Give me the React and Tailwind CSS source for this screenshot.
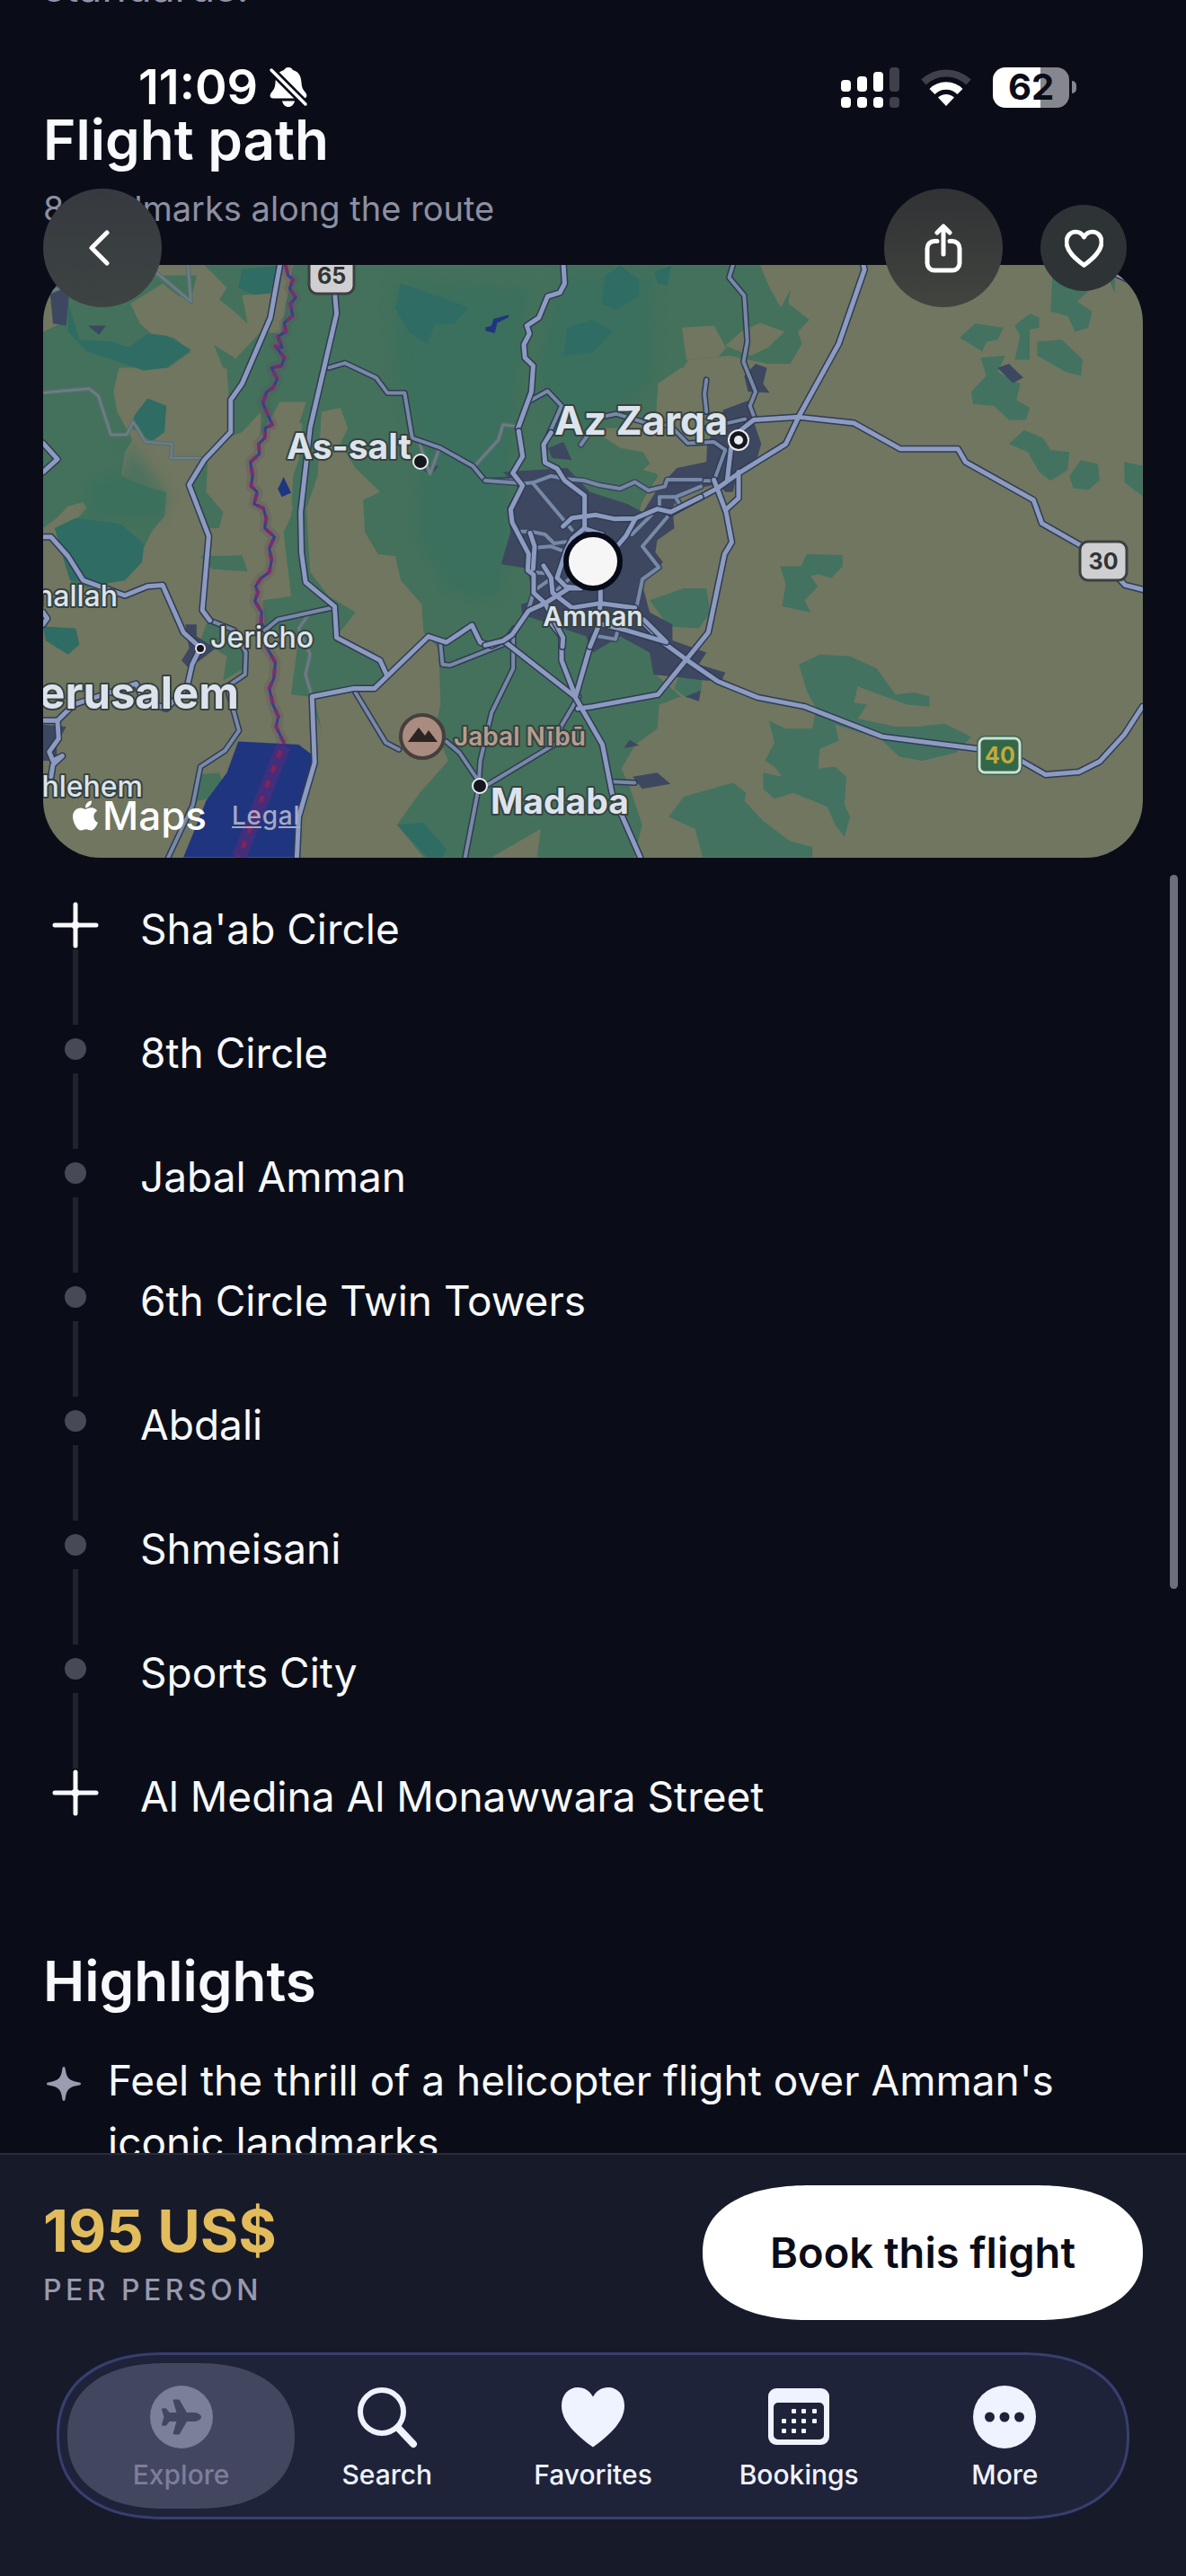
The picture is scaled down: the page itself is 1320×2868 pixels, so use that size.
import React, { useState } from 'react';
import { FaApple, FaPlane } from 'react-icons/fa';

const landmarks = [
  "Sha'ab Circle",
  '8th Circle',
  'Jabal Amman',
  '6th Circle Twin Towers',
  'Abdali',
  'Shmeisani',
  'Sports City',
  'Al Medina Al Monawwara Street',
];

const HEART = 'M12 21.6C6.6 17.6 2 13.4 2 8.4 2 4.9 4.3 2.6 7.2 2.6c2 0 3.8 1.1 4.8 3 1-1.9 2.8-3 4.8-3 2.9 0 5.2 2.3 5.2 5.8 0 5-4.6 9.2-10 13.2z';

/* ---------- map data ---------- */

// land cover, terrain grid
const green = [
  'M114 200L160 180 180 60 520 60 505 120 470 110 430 80 345 130 370 180 400 205 460 215 505 250 445 290 315 290 300 350 310 400 350 470 330 500 320 560 400 590 440 600 435 660 400 700 380 740 375 775 330 820 270 825 230 840 190 830 175 790 145 690 200 670 230 640 220 625 180 635 150 665 114 690z',
  'M775 34L2010 34 2035 90 2065 140 2090 95 2085 130 2140 170 2110 200 2120 230 2090 280 2030 280 1930 260 1820 270 1800 300 1740 330 1735 400 1640 440 1560 440 1640 490 1700 500 1740 560 1700 620 1600 900 1720 1000 1740 1060 1800 1110 1743 1130 1738 1190 1680 1230 1643 1290 1663 1330 1698 1430 1678 1511 1420 1511 1430 1440 1300 1511 790 1511 830 1290 850 1190 815 1110 770 1105 790 960 700 940 695 870 770 860 750 700 775 640 730 560 790 430 810 375 740 375 690 460 690 400 740 210z',
  'M540 34L740 34 715 100 640 110 655 180 620 150 580 120 600 90z',
  'M600 290L690 200 740 205 720 320 690 400 640 450 590 470 550 510 545 600 590 650 580 690 550 690 500 585 540 520 610 440z',
  'M565 232L620 265 635 300 590 290z',
  'M530 760L640 758 655 798 560 792z',
  'M550 920L650 960 645 1040 590 1070 600 1010 530 970z',
  'M520 1305L580 1300 590 1325 550 1365 515 1372z',
];

const tan = [
  'M850 400L900 390 920 440 900 480 940 540 1005 600 960 620 965 700 1000 755 1045 760 1060 820 1115 880 1120 950 1160 990 1165 1130 1150 1190 1185 1270 1110 1350 1050 1430 1120 1511 790 1511 830 1290 850 1190 830 1110 990 1095 1030 1055 990 1000 890 960 940 900 870 860 820 800 810 640 840 560z',
  'M735 440L760 410 800 430 790 520 775 560 770 660 750 700 700 640 690 560z',
  'M1803 190L1888 185 1920 240 1900 262 1815 270z',
  'M1918 235L1960 200 2010 178 2075 200 2030 240 1985 260z',
  'M1740 330L1800 290 1960 300 1970 380 1900 400 1860 520 1800 530 1760 560 1700 545 1750 500 1700 440 1640 450 1738 400z',
];

const teal = [
  'M180 130L210 220 300 225 340 240 390 205 440 210 505 245 440 290 380 297 300 270 230 250 180 200z',
  'M355 410L390 366 440 385 435 450 400 475 350 440z',
  'M145 690L200 665 320 680 380 730 375 775 330 820 270 830 185 820z',
  'M114 935L200 940 210 980 180 1005 120 970z',
  'M640 45L735 36 715 105 670 108 630 90z',
  'M1060 80L1240 140 1200 180 1150 180 1130 230 1080 200 1045 140z',
  'M1500 190L1568 170 1620 200 1568 250 1490 262z',
  'M1590 130L1600 60 1640 36 1690 70 1690 110 1630 145z',
  'M1730 50L1775 36 1765 85 1740 80z',
  'M1050 1430L1120 1425 1180 1490 1170 1511 1130 1511z',
];

// hill shading
const hills = [
  'M1040 80L1400 90 1370 300 1350 540 1340 780 1310 880 1180 840 1100 700 1110 480 1050 300z',
  'M1480 60L1730 60 1720 330 1500 480 1420 300z',
  'M340 480L440 600 430 660 230 660 240 570 320 560z',
];

const eastGreen = [
  'M1215 60L1380 60 1380 105 1365 70 1320 90 1280 125 1320 150 1310 190 1275 200 1255 160 1210 150z',
  'M1175 225L1240 220 1295 270 1290 310 1250 300 1175 260z',
  'M1115 185L1155 155 1180 165 1180 190 1155 195 1155 270 1115 270 1130 210z',
  'M970 215L1010 180 1085 190 1070 220 1040 225 1030 250z',
  'M1025 265L1090 260 1070 300 1130 330 1120 370 1155 390 1145 420 1100 420 1060 385 1005 380 1000 350 1040 310z',
  'M1100 480L1140 445 1190 465 1210 495 1260 500 1255 545 1210 572 1180 550 1150 500z',
  'M1260 560L1290 520 1335 530 1340 570 1310 595 1270 590z',
  'M1405 525L1453 535 1453 610 1405 575z',
  'M495 785L550 785 565 755 660 757 660 785 630 815 595 805 575 810 595 835 560 870 575 900 500 885 510 830z',
  'M150 870L240 840 300 840 310 900 280 940 200 935z',
  'M215 1090L230 1050 290 1060 285 1100 250 1115z',
  'M545 1030L600 1005 680 1010 750 1040 800 1105 850 1100 890 1110 890 1135 830 1130 700 1085 690 1125 725 1130 700 1165 800 1185 860 1185 930 1178 1000 1210 960 1250 870 1270 810 1260 760 1215 640 1180 650 1220 600 1240 595 1290 640 1285 670 1310 665 1380 680 1410 665 1460 640 1430 620 1385 530 1350 480 1365 450 1340 450 1300 500 1310 480 1285 455 1270 480 1225 465 1170 510 1190 580 1190 590 1140 565 1095z',
  'M200 1410L240 1360 370 1325 405 1350 400 1370 450 1420 520 1470 580 1485 580 1511 290 1511 270 1440z',
];

const urban = [
  'M130 80L185 80 175 185 140 180z',
  'M232 185L280 185 262 208z',
  'M490 930L520 930 520 960 570 990 500 1040 480 1020 500 990z',
  'M114 1180L175 1185 150 1230 150 1270 114 1270z',
  'M1092 530L1160 535 1140 558z',
  'M1450 490L1490 475 1512 520 1460 515z',
  'M1968 310L1998 280 2028 290 2018 330 2035 352 1978 350z',
  'M1330 550L1500 540 1560 600 1660 630 1700 650 1740 590 1790 540 1868 525 1870 480 1913 395 1983 370 1988 410 2013 480 1998 530 1948 560 1938 600 1918 600 1898 580 1798 600 1778 640 1783 690 1738 720 1733 750 1753 775 1698 830 1718 900 1778 930 1778 970 1868 1000 1848 1030 1918 1050 1908 1070 1868 1070 1728 1055 1718 1000 1640 960 1568 1000 1550 960 1380 905 1378 880 1410 870 1395 790 1325 780 1350 700 1340 640 1370 590z',
  'M2638 290L2668 280 2706 315 2678 328z',
  'M1813 1110L1853 1095 1848 1122z',
  'M1650 1238L1665 1218 1690 1232z',
  'M1673 1310L1738 1300 1773 1328 1698 1340z',
];

const water = [
  'M630 1222L790 1230 825 1255 830 1280 790 1400 785 1511 485 1511 520 1430 545 1370 600 1300z',
  'M735 592L750 562 770 602 745 612z',
  'M1283 190L1300 185 1305 168 1345 158 1345 164 1315 178 1308 204 1285 198z',
];

const majorRoads = [
  'M740 34L715 165 640 330 610 370 610 450 540 520 500 582 552 710 535 895 555 920',
  'M885 100L890 155 820 440 795 650 797 750 808 825 885 885 890 963 1005 1020 1022 1055',
  'M785 1511L790 1410 832 1275 825 1110 935 1090 990 1090 1133 960 1180 975 1248 932 1270 975 1300 983 1330 970',
  'M1490 34L1493 80 1480 103 1448 112 1425 165 1393 185 1400 205 1385 232 1388 265 1410 285 1405 350 1370 440',
  'M114 712L135 712 180 760 220 820 330 858 390 835 430 832 485 950 530 988 508 1030 495 1085 440 1140 380 1120 360 1078 195 1130 152 1170 114 1170',
  'M152 1170L155 1215 130 1248 140 1270 165 1258 140 1280 135 1310',
  'M114 478L152 518 114 550',
  'M114 900L125 915 114 930',
  'M1330 970L1520 1110 1593 1230 1618 1350 1693 1511',
  'M1460 930L1485 960 1485 1020 1522 1110 1568 960',
  'M2283 34L2286 45 2218 230 2113 410 2078 480 1958 550 1898 590 1773 653',
  'M1953 450L1993 420 2113 413 2258 428 2380 492 2533 492 2553 525 2733 620 2755 678 2880 745 2963 820 2975 832 3021 843',
  'M1953 550L1953 615 1918 645',
  'M1933 490L1923 570',
  'M1888 570L1920 650 1935 725 1916 755 1873 950 1740 1105 1568 1135 1528 1140',
  'M1690 915L1753 975 1818 1020 1898 1072 2003 1112 2128 1135 2333 1210 2583 1240 2700 1270 2765 1305 2853 1298 2908 1272 2973 1205 3021 1135',
  'M2950 55L3000 78',
];

const minorRoads = [
  'M555 920L620 945 650 1000 648 1055 600 1085 632 1195 595 1245 530 1285 510 1380 445 1511',
  'M870 290L912 278 995 315 1025 353 1070 353 1090 465 1165 490 1250 535 1283 572 1355 570',
  'M885 887L735 918 700 945',
  'M940 1100L1020 1225 1055 1242',
  'M1180 1222L1215 1250 1265 1320',
  'M1357 960L1357 1040 1300 1150 1270 1270 1265 1340 1230 1511',
  'M1280 1335L1500 1210 1480 1190 1530 1110',
  'M1165 980L1170 1030 1190 1032 1330 980 1360 940',
  'M1938 34L1928 65 1968 110 1976 225 1966 275 1998 350 1983 385 1993 410',
  'M1405 370L1448 348 1485 385 1440 480 1440 520',
  'M1578 415L1630 405 1700 425 1773 435 1818 478 1888 475 1918 495 1888 572 1763 572',
  'M1868 320L1863 355 1868 400',
  'M1868 440L1970 418',
  'M1618 1322L1678 1325',
];

const faintRoads = [
  'M114 352L235 342 260 360 293 457 335 457 352 425 385 475 455 480 452 515 540 515',
  'M410 50L505 125 497 34',
  'M820 900L790 940 820 1005 808 1055 825 1110',
  'M1255 535L1318 470 1330 432 1370 436',
  'M1110 480L1137 555 1162 490',
  'M120 105L160 90',
];

// downtown streets, finer grid
const cityMajor = [
  'M112 0L125 85 92 140 125 182 85 262 90 305 145 410 142 465 162 480 162 540 200 575 145 600 90 680 60 700 0 715',
  'M220 5L195 45 200 105 240 125 265 165 332 215 332 325',
  'M260 318L290 290 370 280 430 293 500 292 575 260 620 270 720 220',
  'M500 295L470 350 440 385',
  'M390 345L330 325 290 360 270 400 240 490 270 520 320 525 280 525 200 575',
  'M195 450L220 490 225 540 290 590 385 575 500 590',
  'M150 340L165 385 160 460',
  'M385 530L385 575 375 660 350 720',
  'M530 630L605 705 470 665 390 645',
  'M200 575L260 690 258 720',
];

const cityMinor = [
  'M0 165L130 175 160 172 220 150 270 160 330 165 380 180 450 192 500 170 545 198 600 185 608 162 720 162',
  'M160 175L290 330',
  'M555 280L490 345',
  'M610 285L525 385 580 455 525 495 505 590',
  'M120 335L150 335 200 345 230 375 270 370',
  'M160 390L220 385 260 400',
  'M150 470L200 475',
  'M175 525L210 500',
  'M235 535L285 490',
  'M375 685L435 695 440 675',
  'M582 245L582 220 635 220 720 185',
  'M635 220L650 245',
  'M145 595L160 545',
  'M320 45L345 10',
];

const border =
  'M755 34L762 60 775 70 766 92 782 115 768 130 774 160 752 178 756 200 735 212 746 240 728 236 752 265 744 285 718 290 733 318 722 340 705 350 695 378 705 400 720 432 702 440 700 465 684 480 686 505 662 525 668 560 664 585 680 600 672 630 696 640 704 665 700 690 726 712 712 740 718 770 712 800 690 815 676 835 682 850 674 872 692 900 690 925 708 950 704 985 728 1025 724 1065 712 1090 722 1130 736 1160 730 1185 752 1228';

function Roads({ paths, width, color = '#8c9bbf', casing = '#303b55' }) {
  return (
    <g fill="none" strokeLinejoin="round" strokeLinecap="round">
      {paths.map((d) => (
        <path key={d} d={d} stroke={casing} strokeWidth={width + 3} vectorEffect="non-scaling-stroke" />
      ))}
      {paths.map((d) => (
        <path key={d + 'f'} d={d} stroke={color} strokeWidth={width} vectorEffect="non-scaling-stroke" />
      ))}
    </g>
  );
}

function Shapes({ paths, fill, ...rest }) {
  return (
    <g fill={fill} {...rest}>
      {paths.map((d) => (
        <path key={d} d={d} />
      ))}
    </g>
  );
}

function Label({ x, y, size, anchor = 'start', weight = 700, fill = '#dde3ec', children }) {
  return (
    <text
      x={x}
      y={y}
      fontSize={size}
      fontWeight={weight}
      textAnchor={anchor}
      fill={fill}
      stroke="#36423f"
      strokeWidth="4"
      strokeLinejoin="round"
      paintOrder="stroke"
    >
      {children}
    </text>
  );
}

function Town({ x, y, r = 8 }) {
  return <circle cx={x} cy={y} r={r} fill="#15171c" stroke="#e8ebf0" strokeWidth="2" />;
}

function RouteMap() {
  return (
    <div className="relative mt-[39px] h-[660px] overflow-hidden rounded-[64px] bg-[#707660]">
      <svg
        className="h-full w-full"
        viewBox="0 0 1224 660"
        preserveAspectRatio="xMidYMid slice"
        fontFamily="Inter, sans-serif"
        role="img"
        aria-label="Map of the flight route around Amman"
      >
        <g transform="translate(-48 -15) scale(.4209 .4464)">
          <Shapes paths={green} fill="#44715b" />
          <Shapes paths={hills} fill="#35705f" opacity={0.6} style={{ filter: 'blur(18px)' }} />
          <Shapes paths={tan} fill="#707660" />
          <Shapes paths={teal} fill="#2f6c63" />
          <g transform="translate(1568 0)">
            <Shapes paths={eastGreen} fill="#437261" />
          </g>
          <Shapes paths={urban} fill="#3e4760" />
          <Shapes paths={water} fill="#203580" />
          <g fill="none" strokeLinejoin="round">
            <path d={border} stroke="#6b3a6a" strokeOpacity=".2" strokeWidth="12" vectorEffect="non-scaling-stroke" />
            <path d={border} stroke="#343f8c" strokeWidth="3" vectorEffect="non-scaling-stroke" />
            <path d={border} stroke="#74306f" strokeWidth="4" strokeDasharray="9 7" vectorEffect="non-scaling-stroke" />
            <path d="M750 1232L632 1511" stroke="#5a2a78" strokeOpacity=".6" strokeWidth="16" vectorEffect="non-scaling-stroke" />
            <path d="M742 1245L632 1511" stroke="#82235c" strokeWidth="5" strokeDasharray="8 10" vectorEffect="non-scaling-stroke" />
          </g>
          <Roads paths={faintRoads} width={2} color="#6d8088" casing="#5d7070" />
          <Roads paths={minorRoads} width={4} color="#7889a6" />
        </g>
        <g transform="translate(492 185) scale(.3333)">
          <Roads paths={cityMinor} width={4} color="#7889a6" casing="#3a4661" />
        </g>
        <g transform="translate(-48 -15) scale(.4209 .4464)">
          <Roads paths={majorRoads} width={5} />
        </g>
        <g transform="translate(492 185) scale(.3333)">
          <Roads paths={cityMajor} width={5} />
        </g>

        {/* road shields */}
        <g fontSize="25" fontWeight="700" textAnchor="middle">
          <rect x="296" y="-12" width="50" height="44" rx="9" fill="#cfcfd2" stroke="#3d4041" strokeWidth="3" />
          <text x="321" y="21" fill="#333">65</text>
          <rect x="1154" y="308" width="52" height="43" rx="9" fill="#cfcfd2" stroke="#3d4041" strokeWidth="3" />
          <text x="1180" y="339" fill="#333">30</text>
          <rect x="1039" y="524" width="51" height="44" rx="9" fill="#31684a" />
          <rect x="1042" y="527" width="45" height="38" rx="6" fill="none" stroke="#d5dcd6" strokeWidth="3" />
          <text x="1065" y="555" fill="#c4a93a">40</text>
        </g>

        <Town x={420} y={219} />
        <Town x={486} y={580} />
        <Town x={175} y={427} r={5} />
        <Town x={774} y={195} r={11} />
        <circle cx="774" cy="195" r="5" fill="#e8ebf0" />

        <Label x={271} y={216} size={39}>As-salt</Label>
        <Label x={569} y={189} size={44}>Az Zarqa</Label>
        <Label x={612} y={402} size={30} anchor="middle" weight={600}>Amman</Label>
        <Label x={186} y={426} size={32} weight={500}>Jericho</Label>
        <Label x={218} y={494} size={49} anchor="end">Jerusalem</Label>
        <Label x={83} y={380} size={32} anchor="end" weight={500}>Ramallah</Label>
        <Label x={111} y={592} size={32} anchor="end" weight={500}>Bethlehem</Label>
        <Label x={498} y={611} size={39}>Madaba</Label>
        <Label x={457} y={535} size={28} weight={600} fill="#b69d8e">Jabal Nībū</Label>

        {/* peak */}
        <circle cx="422" cy="525" r="24" fill="#a98c7f" stroke="#463f3c" strokeWidth="4" />
        <path d="M406 531l12-16 7 9 4-6 10 13z" fill="#2b2422" />

        {/* aircraft position */}
        <circle cx="612" cy="330" r="30" fill="#f6f6f6" stroke="#070b18" strokeWidth="6" />
      </svg>
      <div className="absolute bottom-[22px] left-8 flex items-center text-white">
        <FaApple className="h-[38px] w-[30px]" />
        <span className="ml-1 text-[44px] leading-[50px] font-medium">Maps</span>
        <a href="#legal" className="ml-7 text-[28px] leading-[50px] font-medium tracking-wide text-[#a3aac4] underline">
          Legal
        </a>
      </div>
    </div>
  );
}

/* ---------- status bar ---------- */

function StatusBar() {
  return (
    <div className="flex h-[46px] items-center justify-between pr-[122px] pl-[154px] text-white">
      <div className="flex items-center gap-3">
        <span className="text-[54px] leading-[46px] font-semibold">11:09</span>
        <svg viewBox="0 0 44 46" className="h-[46px] w-[44px]" fill="currentColor">
          <path d="M22 1c3 0 4 1.500 5 3 7 2 9 7 9.500 14 .3 6 2 8 4.500 11 2.500 3.500 1.500 6.500-2 6.500H5c-3.500 0-4.500-3-2-6.500 2.500-3 4.200-5 4.500-11C8 11 10 6 17 4c1-1.500 2-3 5-3zM15 38.500h14c-1 4-3.500 6.500-7 6.500s-6-2.500-7-6.500z" />
          <path d="M2 3l40 40" stroke="#0a0d18" strokeWidth="9" />
          <path d="M3 4l38 38" stroke="currentColor" strokeWidth="3.500" strokeLinecap="round" />
        </svg>
      </div>
      <div className="flex items-center gap-[23px]">
        <svg viewBox="0 0 65 45" className="h-[45px] w-[65px]" fill="currentColor">
          <rect x="0" y="14" width="11" height="13" rx="4" />
          <rect x="18" y="10" width="11" height="17" rx="4" />
          <rect x="36" y="5" width="11" height="22" rx="4" />
          <rect x="54" y="0" width="11" height="27" rx="4" fill="#3f404b" />
          <rect x="0" y="33" width="11" height="12" rx="4" />
          <rect x="18" y="33" width="11" height="12" rx="4" />
          <rect x="36" y="33" width="11" height="12" rx="4" />
          <rect x="54" y="33" width="11" height="12" rx="4" fill="#3f404b" />
        </svg>
        <svg viewBox="0 0 58 43" className="h-[43px] w-[58px]" fill="none">
          <path d="M4 15.500a36 36 0 0 1 50 0" stroke="#3f404b" strokeWidth="8" />
          <path d="M13.500 26a22 22 0 0 1 31 0" stroke="currentColor" strokeWidth="8.500" />
          <path d="M29 42l-9-9.500a13 13 0 0 1 18 0z" fill="currentColor" />
        </svg>
        <div className="flex items-center gap-[3px]">
          <div className="flex h-[45px] w-[85px] items-center justify-center rounded-[14px] bg-linear-to-r from-white from-62% to-[#85868e] to-62% text-[40px] leading-none font-bold text-[#0a0d18]">
            62
          </div>
          <div className="h-[14px] w-[5px] rounded-r-full bg-[#85868e]" />
        </div>
      </div>
    </div>
  );
}

function TopControls() {
  const [saved, setSaved] = useState(false);

  return (
    <div className="mt-[90px] flex items-center pr-[66px] pl-12 text-white">
      <button aria-label="Back" className="mr-auto flex size-[132px] items-center justify-center rounded-full bg-linear-to-b from-[#363a40] to-[#3d4342]">
        <svg viewBox="0 0 32 40" className="h-10 w-8" fill="none" stroke="currentColor" strokeWidth="5" strokeLinecap="round" strokeLinejoin="round">
          <path d="M21 3L4 20l17 17" />
        </svg>
      </button>
      <button aria-label="Share" className="mr-[42px] flex size-[132px] items-center justify-center rounded-full bg-linear-to-b from-[#303235] to-[#42443f]">
        <svg viewBox="0 -4 42 56" className="h-[56px] w-[42px]" fill="none" stroke="currentColor" strokeWidth="5" strokeLinecap="round" strokeLinejoin="round">
          <path d="M14 16.500h-3a8 8 0 0 0-8 8V41a8 8 0 0 0 8 8h20a8 8 0 0 0 8-8V24.500a8 8 0 0 0-8-8h-3" />
          <path d="M21 31V0M14 7l7-7 7 7" />
        </svg>
      </button>
      <button
        aria-label="Add to favorites"
        aria-pressed={saved}
        onClick={() => setSaved(!saved)}
        className="flex size-24 items-center justify-center rounded-full bg-[#2e3335]"
      >
        <svg viewBox="1 1 22 22" className="size-[43px]" fill={saved ? 'currentColor' : 'none'} stroke="currentColor" strokeWidth="2.500" strokeLinejoin="round">
          <path d={HEART} />
        </svg>
      </button>
    </div>
  );
}

/* ---------- route list ---------- */

function Rotor() {
  return (
    <svg viewBox="0 0 54 54" className="size-[54px]" stroke="#f8f9fd" strokeWidth="5" strokeLinecap="round">
      <path d="M27 4v46M4 27h46" />
      <circle cx="27" cy="27" r="2" fill="#f8f9fd" />
    </svg>
  );
}

function LandmarkList() {
  return (
    <ol className="mt-12">
      {landmarks.map((name, i) => {
        const first = i === 0;
        const last = i === landmarks.length - 1;
        return (
          <li key={name} className="flex gap-9">
            <div className="flex w-[72px] flex-col items-center">
              <div className="flex size-[54px] items-center justify-center">
                {first || last ? <Rotor /> : <span className="size-6 rounded-full bg-[#464956]" />}
              </div>
              {!last && <div className="h-[84px] w-[6px] bg-[#20222d]" />}
            </div>
            <span className="text-[46px] leading-[62px]">{name}</span>
          </li>
        );
      })}
    </ol>
  );
}

/* ---------- tab bar ---------- */

const ExploreIcon = () => (
  <span className="flex size-[70px] items-center justify-center rounded-full bg-[#7c7f9a]">
    <FaPlane className="size-[44px] text-[#43465f]" />
  </span>
);

const SearchIcon = () => (
  <svg viewBox="0 0 70 70" className="size-[70px]" fill="none" stroke="currentColor" strokeLinecap="round">
    <circle cx="29" cy="29" r="24" strokeWidth="6" />
    <path d="M47 47l17 18" strokeWidth="8" />
  </svg>
);

const HeartIcon = () => (
  <svg viewBox="2 2 20 20" className="size-[70px]" fill="currentColor">
    <path d={HEART} />
  </svg>
);

const CalendarIcon = () => (
  <svg viewBox="0 0 70 70" className="size-[70px]" fill="currentColor">
    <path fillRule="evenodd" d="M10 3h50a9 9 0 0 1 9 9v45a9 9 0 0 1-9 9H10a9 9 0 0 1-9-9V12a9 9 0 0 1 9-9zm2 16a5 5 0 0 0-5 5v31a5 5 0 0 0 5 5h46a5 5 0 0 0 5-5V24a5 5 0 0 0-5-5z" />
    {[[27, 26], [38, 26], [50, 26], [16, 37], [27, 37], [38, 37], [50, 37], [16, 48], [27, 48], [38, 48]].map(([x, y]) => (
      <rect key={`${x}-${y}`} x={x} y={y} width="5" height="5" rx="1" />
    ))}
  </svg>
);

const MoreIcon = () => (
  <svg viewBox="0 0 70 70" className="size-[70px]" fill="currentColor">
    <circle cx="35" cy="35" r="35" />
    <g fill="#1f2339">
      <circle cx="18.500" cy="35" r="5.500" />
      <circle cx="35" cy="35" r="5.500" />
      <circle cx="51.500" cy="35" r="5.500" />
    </g>
  </svg>
);

const tabs = [
  { label: 'Explore', Icon: ExploreIcon, active: true },
  { label: 'Search', Icon: SearchIcon },
  { label: 'Favorites', Icon: HeartIcon },
  { label: 'Bookings', Icon: CalendarIcon },
  { label: 'More', Icon: MoreIcon },
];

function TabBar() {
  return (
    <nav className="mx-[63px] mt-9 flex rounded-[120px/93px] border-3 border-[#393e70] bg-[#1f2339] px-[21px] py-[9px] [corner-shape:superellipse(1.2)]">
      {tabs.map(({ label, Icon, active }) => (
        <button
          key={label}
          aria-current={active ? 'page' : undefined}
          className={`-mx-3 flex h-[162px] flex-1 flex-col items-center gap-[11px] rounded-[110px/81px] pt-[25px] text-[30px] leading-9 font-medium [corner-shape:superellipse(1.2)] ${
            active ? 'bg-[#43465f] text-[#7c7f9a]' : 'text-[#eff2ff]'
          }`}
        >
          <Icon />
          {label}
        </button>
      ))}
    </nav>
  );
}

const App = () => {
  return (
    <div className="relative flex h-screen flex-col overflow-hidden bg-[#0a0d18] font-[Inter,sans-serif] text-[#f8f9fd]">
      <main className="min-h-0 flex-1 overflow-hidden px-12">
        <p className="-mt-[49px] text-[46px] leading-[69px] text-[#9494a8]">standards.</p>

        <section>
          <h2 className="mt-24 text-[62px] leading-[80px] font-semibold">Flight path</h2>
          <p className="mt-3 text-[38px] leading-[48px] text-[#8e8fa2]">8 landmarks along the route</p>
          <RouteMap />
          <LandmarkList />
        </section>

        <section>
          <h2 className="mt-[135px] text-[62px] leading-[80px] font-semibold">Highlights</h2>
          <div className="mt-9 flex gap-[30px]">
            <svg viewBox="0 0 38 38" className="mt-[19px] ml-1 size-[38px] shrink-0" fill="#9c9cb0">
              <path d="M19 0c1.200 0 1.500 1 1.800 3 1.200 9.500 4.200 12.500 14.200 14.200 2 .3 3 .6 3 1.800s-1 1.500-3 1.800c-10 1.700-13 4.700-14.200 14.200-.3 2-.6 3-1.800 3s-1.500-1-1.800-3C16 25.500 13 22.500 3 20.800c-2-.3-3-.6-3-1.800s1-1.500 3-1.800C13 15.500 16 12.500 17.200 3c.3-2 .6-3 1.800-3z" />
            </svg>
            <p className="pr-20 text-[46px] leading-[69px]">
              Feel the thrill of a helicopter flight over Amman's iconic landmarks
            </p>
          </div>
        </section>
      </main>

      <footer className="shrink-0 border-t-2 border-[#2a2c39] bg-[#171a29] pt-[34px] pb-[63px]">
        <div className="flex items-center justify-between px-12">
          <div>
            <p className="text-[65px] leading-[84px] font-bold text-[#e2bc5c]">195 US$</p>
            <p className="text-[32px] leading-[48px] font-medium tracking-[0.14em] text-[#9899ad]">PER PERSON</p>
          </div>
          <button className="h-[150px] rounded-[120px/75px] bg-white px-[75px] text-[47px] font-semibold text-[#0a0d18] [corner-shape:superellipse(1.2)]">
            Book this flight
          </button>
        </div>
        <TabBar />
      </footer>

      <header className="absolute inset-x-0 top-[74px]">
        <StatusBar />
        <TopControls />
      </header>

      {/* scroll indicator */}
      <div className="absolute top-[974px] right-[9px] h-[795px] w-[9px] rounded-full bg-[#6e6f7c]" />
    </div>
  );
};

export default App;
